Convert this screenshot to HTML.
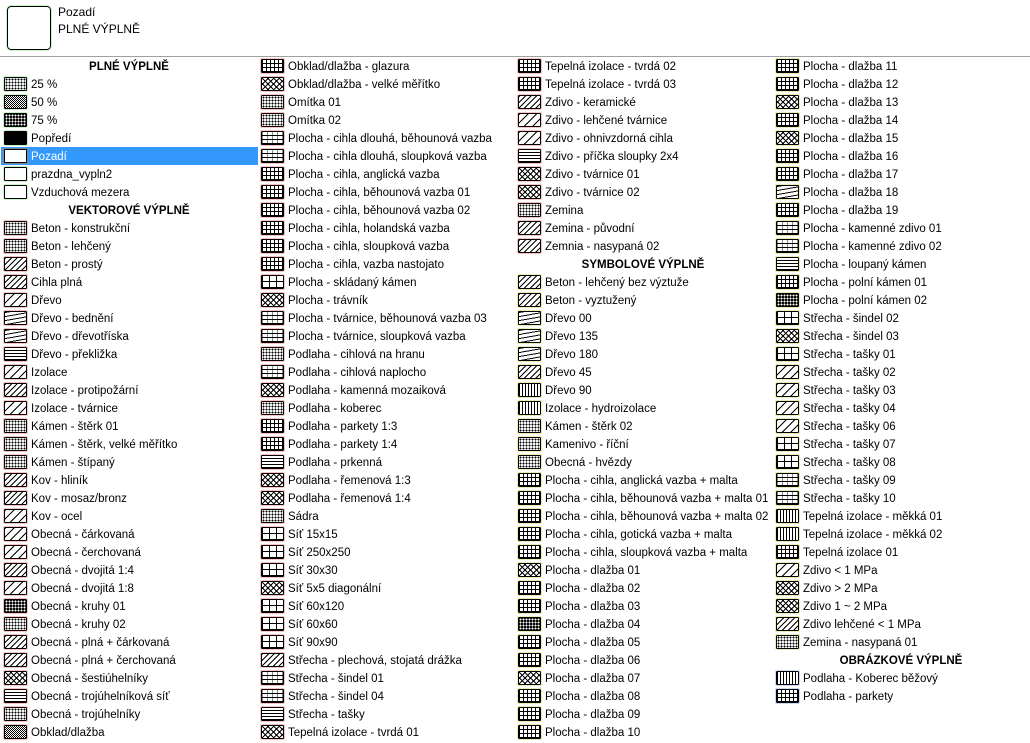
<!DOCTYPE html>
<html><head><meta charset="utf-8">
<style>
body{margin:0;width:1030px;height:742px;overflow:hidden;background:#fff;font-family:"Liberation Sans","DejaVu Sans",sans-serif;font-size:11.5px;color:#000;position:relative}
.top{position:absolute;left:7px;top:6px;width:42px;height:42px;border:1px solid #000;border-radius:4px;outline:1px solid #c8f5c8}
.t1{position:absolute;left:58px;top:5px;font-size:12px}
.t2{position:absolute;left:58px;top:22px;font-size:12px}
.sep{position:absolute;left:0;top:56px;width:1030px;height:1px;background:#a0a0a0}
.c{position:absolute;top:57px;width:258px}
.r{height:18px;line-height:20px;position:relative;padding-left:31px;white-space:nowrap}
.r i{position:absolute;left:4px;top:2px;width:21px;height:12px;border:1px solid #000;border-radius:1px;outline:1px solid #f7c4c4;background:#fff}
.g1 i{outline-color:#c8f5c8}
.y i{outline-color:#ecebb0}
.hd{text-align:center;font-weight:bold;padding-left:0}
.sel{background:#3399ff;color:#fff}
.h{background:repeating-linear-gradient(135deg,#000 0 1px,#fff 1px 4px)!important}
.h2{background:repeating-linear-gradient(135deg,#000 0 1px,#fff 1px 6px)!important}
.x{background:repeating-linear-gradient(45deg,#000 0 1px,transparent 1px 4px),repeating-linear-gradient(135deg,#000 0 1px,#fff 1px 4px)!important}
.gr{background:repeating-linear-gradient(0deg,#000 0 1px,transparent 1px 4px),repeating-linear-gradient(90deg,#000 0 1px,#fff 1px 4px)!important}
.gw{background:repeating-linear-gradient(0deg,#000 0 1px,transparent 1px 6px),repeating-linear-gradient(90deg,#000 0 1px,#fff 1px 7px)!important}
.d{background:radial-gradient(circle,#000 0 0.9px,#fff 1.1px) 0 0/3px 3px!important}
.dd{background:radial-gradient(circle,#fff 0 0.9px,#000 1.1px) 0 0/3px 3px!important}
.hl{background:repeating-linear-gradient(0deg,#000 0 1px,#fff 1px 3px)!important}
.br{background:repeating-linear-gradient(0deg,#000 0 1px,transparent 1px 4px),repeating-linear-gradient(90deg,#888 0 1px,#fff 1px 5px)!important}
.vl{background:repeating-linear-gradient(90deg,#000 0 1px,#fff 1px 3px)!important}
.k{background:#000!important}
.ck{background:repeating-conic-gradient(#000 0 25%,#fff 0 50%) 0 0/2px 2px!important}
.wv{background:repeating-linear-gradient(170deg,#000 0 1px,#fff 1px 4px)!important}
</style></head><body>
<div class="top"></div>
<div class="t1">Pozadí</div>
<div class="t2">PLNÉ VÝPLNĚ</div>
<div class="sep"></div>

<div class="c" style="left:0">
<div class="r hd">PLNÉ VÝPLNĚ</div>
<div class="r g1"><i class="d"></i>25 %</div>
<div class="r g1"><i class="ck"></i>50 %</div>
<div class="r g1"><i class="dd"></i>75 %</div>
<div class="r g1"><i class="k"></i>Popředí</div>
<div class="r g1 sel" style="margin-left:1px;padding-left:30px"><i style="left:3px;outline-color:#888"></i>Pozadí</div>
<div class="r g1"><i></i>prazdna_vypln2</div>
<div class="r g1"><i></i>Vzduchová mezera</div>
<div class="r hd">VEKTOROVÉ VÝPLNĚ</div>
<div class="r"><i class="d"></i>Beton - konstrukční</div>
<div class="r"><i class="d"></i>Beton - lehčený</div>
<div class="r"><i class="h"></i>Beton - prostý</div>
<div class="r"><i class="h"></i>Cihla plná</div>
<div class="r"><i class="h2"></i>Dřevo</div>
<div class="r"><i class="wv"></i>Dřevo - bednění</div>
<div class="r"><i class="wv"></i>Dřevo - dřevotříska</div>
<div class="r"><i class="hl"></i>Dřevo - překližka</div>
<div class="r"><i class="h2"></i>Izolace</div>
<div class="r"><i class="h"></i>Izolace - protipožární</div>
<div class="r"><i class="h2"></i>Izolace - tvárnice</div>
<div class="r"><i class="d"></i>Kámen - štěrk 01</div>
<div class="r"><i class="d"></i>Kámen - štěrk, velké měřítko</div>
<div class="r"><i class="d"></i>Kámen - štípaný</div>
<div class="r"><i class="h"></i>Kov - hliník</div>
<div class="r"><i class="h"></i>Kov - mosaz/bronz</div>
<div class="r"><i class="h2"></i>Kov - ocel</div>
<div class="r"><i class="h2"></i>Obecná - čárkovaná</div>
<div class="r"><i class="h2"></i>Obecná - čerchovaná</div>
<div class="r"><i class="h"></i>Obecná - dvojitá 1:4</div>
<div class="r"><i class="h2"></i>Obecná - dvojitá 1:8</div>
<div class="r"><i class="dd"></i>Obecná - kruhy 01</div>
<div class="r"><i class="d"></i>Obecná - kruhy 02</div>
<div class="r"><i class="h"></i>Obecná - plná + čárkovaná</div>
<div class="r"><i class="h"></i>Obecná - plná + čerchovaná</div>
<div class="r"><i class="x"></i>Obecná - šestiúhelníky</div>
<div class="r"><i class="hl"></i>Obecná - trojúhelníková síť</div>
<div class="r"><i class="d"></i>Obecná - trojúhelníky</div>
<div class="r"><i class="ck"></i>Obklad/dlažba</div>
</div>

<div class="c" style="left:257px">
<div class="r"><i class="gr"></i>Obklad/dlažba - glazura</div>
<div class="r"><i class="x"></i>Obklad/dlažba - velké měřítko</div>
<div class="r"><i class="d"></i>Omítka 01</div>
<div class="r"><i class="d"></i>Omítka 02</div>
<div class="r"><i class="br"></i>Plocha - cihla dlouhá, běhounová vazba</div>
<div class="r"><i class="br"></i>Plocha - cihla dlouhá, sloupková vazba</div>
<div class="r"><i class="gr"></i>Plocha - cihla, anglická vazba</div>
<div class="r"><i class="gr"></i>Plocha - cihla, běhounová vazba 01</div>
<div class="r"><i class="gr"></i>Plocha - cihla, běhounová vazba 02</div>
<div class="r"><i class="gr"></i>Plocha - cihla, holandská vazba</div>
<div class="r"><i class="gr"></i>Plocha - cihla, sloupková vazba</div>
<div class="r"><i class="gr"></i>Plocha - cihla, vazba nastojato</div>
<div class="r"><i class="gw"></i>Plocha - skládaný kámen</div>
<div class="r"><i class="x"></i>Plocha - trávník</div>
<div class="r"><i class="br"></i>Plocha - tvárnice, běhounová vazba 03</div>
<div class="r"><i class="br"></i>Plocha - tvárnice, sloupková vazba</div>
<div class="r"><i class="d"></i>Podlaha - cihlová na hranu</div>
<div class="r"><i class="br"></i>Podlaha - cihlová naplocho</div>
<div class="r"><i class="x"></i>Podlaha - kamenná mozaiková</div>
<div class="r"><i class="d"></i>Podlaha - koberec</div>
<div class="r"><i class="gr"></i>Podlaha - parkety 1:3</div>
<div class="r"><i class="gr"></i>Podlaha - parkety 1:4</div>
<div class="r"><i class="hl"></i>Podlaha - prkenná</div>
<div class="r"><i class="x"></i>Podlaha - řemenová 1:3</div>
<div class="r"><i class="x"></i>Podlaha - řemenová 1:4</div>
<div class="r"><i class="d"></i>Sádra</div>
<div class="r"><i class="gw"></i>Síť 15x15</div>
<div class="r"><i class="gw"></i>Síť 250x250</div>
<div class="r"><i class="gw"></i>Síť 30x30</div>
<div class="r"><i class="x"></i>Síť 5x5 diagonální</div>
<div class="r"><i class="gw"></i>Síť 60x120</div>
<div class="r"><i class="gw"></i>Síť 60x60</div>
<div class="r"><i class="gw"></i>Síť 90x90</div>
<div class="r"><i class="h"></i>Střecha - plechová, stojatá drážka</div>
<div class="r"><i class="br"></i>Střecha - šindel 01</div>
<div class="r"><i class="br"></i>Střecha - šindel 04</div>
<div class="r"><i class="hl"></i>Střecha - tašky</div>
<div class="r"><i class="x"></i>Tepelná izolace - tvrdá 01</div>
</div>

<div class="c" style="left:514px">
<div class="r"><i class="gr"></i>Tepelná izolace - tvrdá 02</div>
<div class="r"><i class="gr"></i>Tepelná izolace - tvrdá 03</div>
<div class="r"><i class="h"></i>Zdivo - keramické</div>
<div class="r"><i class="h2"></i>Zdivo - lehčené tvárnice</div>
<div class="r"><i class="h2"></i>Zdivo - ohnivzdorná cihla</div>
<div class="r"><i class="hl"></i>Zdivo - příčka sloupky 2x4</div>
<div class="r"><i class="x"></i>Zdivo - tvárnice 01</div>
<div class="r"><i class="x"></i>Zdivo - tvárnice 02</div>
<div class="r"><i class="d"></i>Zemina</div>
<div class="r"><i class="h"></i>Zemina - původní</div>
<div class="r"><i class="h"></i>Zemnia - nasypaná 02</div>
<div class="r hd">SYMBOLOVÉ VÝPLNĚ</div>
<div class="r y"><i class="h"></i>Beton - lehčený bez výztuže</div>
<div class="r y"><i class="h"></i>Beton - vyztužený</div>
<div class="r y"><i class="wv"></i>Dřevo 00</div>
<div class="r y"><i class="wv"></i>Dřevo 135</div>
<div class="r y"><i class="wv"></i>Dřevo 180</div>
<div class="r y"><i class="h"></i>Dřevo 45</div>
<div class="r y"><i class="vl"></i>Dřevo 90</div>
<div class="r y"><i class="vl"></i>Izolace - hydroizolace</div>
<div class="r y"><i class="d"></i>Kámen - štěrk 02</div>
<div class="r y"><i class="d"></i>Kamenivo - říční</div>
<div class="r y"><i class="d"></i>Obecná - hvězdy</div>
<div class="r y"><i class="gr"></i>Plocha - cihla, anglická vazba + malta</div>
<div class="r y"><i class="gr"></i>Plocha - cihla, běhounová vazba + malta 01</div>
<div class="r y"><i class="gr"></i>Plocha - cihla, běhounová vazba + malta 02</div>
<div class="r y"><i class="gr"></i>Plocha - cihla, gotická vazba + malta</div>
<div class="r y"><i class="gr"></i>Plocha - cihla, sloupková vazba + malta</div>
<div class="r y"><i class="x"></i>Plocha - dlažba 01</div>
<div class="r y"><i class="gr"></i>Plocha - dlažba 02</div>
<div class="r y"><i class="gr"></i>Plocha - dlažba 03</div>
<div class="r y"><i class="dd"></i>Plocha - dlažba 04</div>
<div class="r y"><i class="gr"></i>Plocha - dlažba 05</div>
<div class="r y"><i class="gr"></i>Plocha - dlažba 06</div>
<div class="r y"><i class="x"></i>Plocha - dlažba 07</div>
<div class="r y"><i class="gr"></i>Plocha - dlažba 08</div>
<div class="r y"><i class="gr"></i>Plocha - dlažba 09</div>
<div class="r y"><i class="gr"></i>Plocha - dlažba 10</div>
</div>

<div class="c" style="left:772px">
<div class="r y"><i class="gr"></i>Plocha - dlažba 11</div>
<div class="r y"><i class="gr"></i>Plocha - dlažba 12</div>
<div class="r y"><i class="x"></i>Plocha - dlažba 13</div>
<div class="r y"><i class="gr"></i>Plocha - dlažba 14</div>
<div class="r y"><i class="x"></i>Plocha - dlažba 15</div>
<div class="r y"><i class="gr"></i>Plocha - dlažba 16</div>
<div class="r y"><i class="gr"></i>Plocha - dlažba 17</div>
<div class="r y"><i class="wv"></i>Plocha - dlažba 18</div>
<div class="r y"><i class="gr"></i>Plocha - dlažba 19</div>
<div class="r y"><i class="br"></i>Plocha - kamenné zdivo 01</div>
<div class="r y"><i class="br"></i>Plocha - kamenné zdivo 02</div>
<div class="r y"><i class="hl"></i>Plocha - loupaný kámen</div>
<div class="r y"><i class="gr"></i>Plocha - polní kámen 01</div>
<div class="r y"><i class="dd"></i>Plocha - polní kámen 02</div>
<div class="r y"><i class="gw"></i>Střecha - šindel 02</div>
<div class="r y"><i class="x"></i>Střecha - šindel 03</div>
<div class="r y"><i class="gw"></i>Střecha - tašky 01</div>
<div class="r y"><i class="h2"></i>Střecha - tašky 02</div>
<div class="r y"><i class="h2"></i>Střecha - tašky 03</div>
<div class="r y"><i class="h2"></i>Střecha - tašky 04</div>
<div class="r y"><i class="h2"></i>Střecha - tašky 06</div>
<div class="r y"><i class="gw"></i>Střecha - tašky 07</div>
<div class="r y"><i class="gw"></i>Střecha - tašky 08</div>
<div class="r y"><i class="br"></i>Střecha - tašky 09</div>
<div class="r y"><i class="br"></i>Střecha - tašky 10</div>
<div class="r y"><i class="vl"></i>Tepelná izolace - měkká 01</div>
<div class="r y"><i class="vl"></i>Tepelná izolace - měkká 02</div>
<div class="r y"><i class="gr"></i>Tepelná izolace 01</div>
<div class="r y"><i class="h2"></i>Zdivo &lt; 1 MPa</div>
<div class="r y"><i class="x"></i>Zdivo &gt; 2 MPa</div>
<div class="r y"><i class="x"></i>Zdivo 1 ~ 2 MPa</div>
<div class="r y"><i class="h"></i>Zdivo lehčené &lt; 1 MPa</div>
<div class="r y"><i class="d"></i>Zemina - nasypaná 01</div>
<div class="r hd">OBRÁZKOVÉ VÝPLNĚ</div>
<div class="r"><i class="vl" style="outline-color:#c8d8f5"></i>Podlaha - Koberec běžový</div>
<div class="r"><i class="gr" style="outline-color:#c8d8f5"></i>Podlaha - parkety</div>
</div>
</body></html>
